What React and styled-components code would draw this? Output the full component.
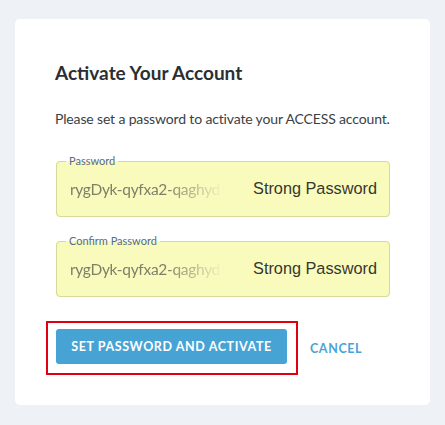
import React from 'react'
import styled, { createGlobalStyle } from 'styled-components'

const Global = createGlobalStyle`
    html, body {
        margin: 0;
        padding: 0;
        background: #eef1f5;
        font-family: Lato, "Open Sans", sans-serif;
    }
`

const Page = styled.div`
    padding: 19px 15px 20px 15px;
    height: 425px;
    box-sizing: border-box;
`

const Card = styled.div`
    background: #ffffff;
    border-radius: 5px;
    padding: 42px 40px 40px 40px;
    height: 386px;
    box-sizing: border-box;
`

const Title = styled.h2`
    margin: 0;
    font-size: 19px;
    font-weight: 700;
    color: #2b2f33;
    line-height: 24px;
`

const Lead = styled.p`
    margin: 24px 0 0 0;
    font-size: 14px;
    letter-spacing: -0.15px;
    color: #3a3f44;
    line-height: 20px;
    white-space: nowrap;
`

const Field = styled.fieldset`
    margin: ${p => p.first ? '26px' : '18px'} 0 0 1px;
    width: 334px;
    height: 62px;
    box-sizing: border-box;
    border: 1px solid #d6d99a;
    border-radius: 4px;
    background: #f9fbbd;
    padding: 0 12px 0 13px;
    display: flex;
    align-items: center;
`

const Legend = styled.legend`
    font-size: 11px;
    color: #5a6b82;
    padding: 0 3px;
    margin-left: -4px;
    line-height: 12px;
`

const Value = styled.span`
    flex: 1;
    font-size: 15.5px;
    letter-spacing: -0.3px;
    color: #7e8068;
    white-space: nowrap;
    overflow: hidden;
    margin-top: -6px;
    -webkit-mask-image: linear-gradient(to right, #000 62%, transparent 100%);
    mask-image: linear-gradient(to right, #000 62%, transparent 100%);
    max-width: 154px;
`

const Strength = styled.span`
    margin-left: auto;
    font-family: "Liberation Sans", Arial, sans-serif;
    font-size: 16.3px;
    color: #37372c;
    margin-top: -6px;
`

const Actions = styled.div`
    display: flex;
    align-items: center;
    margin-top: 24px;
    gap: 12px;
`

const Focus = styled.div`
    border: 2px solid #e00010;
    padding: 6px 9px 9px 8px;
    margin-left: -9px;
    display: flex;
`

const Primary = styled.button`
    background: #48a3d5;
    color: #ffffff;
    border: none;
    border-radius: 3px;
    height: 35px;
    width: 231px;
    padding: 0;
    font-family: Lato, sans-serif;
    font-size: 12.5px;
    font-weight: 700;
    letter-spacing: 0.6px;
    cursor: pointer;
`

const Link = styled.button`
    background: none;
    border: none;
    padding: 0;
    color: #4aa3d6;
    font-family: Lato, sans-serif;
    font-size: 12.5px;
    font-weight: 700;
    letter-spacing: 0.6px;
    cursor: pointer;
`

const PasswordField = ({ label, value, first }) => (
    <Field first={first}>
        <Legend>{label}</Legend>
        <Value>{value}</Value>
        <Strength>Strong Password</Strength>
    </Field>
)

export default function App() {
    return (
        <Page>
            <Global />
            <Card>
                <Title>Activate Your Account</Title>
                <Lead>Please set a password to activate your ACCESS account.</Lead>
                <PasswordField first label="Password" value="rygDyk-qyfxa2-qaghyd" />
                <PasswordField label="Confirm Password" value="rygDyk-qyfxa2-qaghyd" />
                <Actions>
                    <Focus>
                        <Primary>SET PASSWORD AND ACTIVATE</Primary>
                    </Focus>
                    <Link>CANCEL</Link>
                </Actions>
            </Card>
        </Page>
    )
}
